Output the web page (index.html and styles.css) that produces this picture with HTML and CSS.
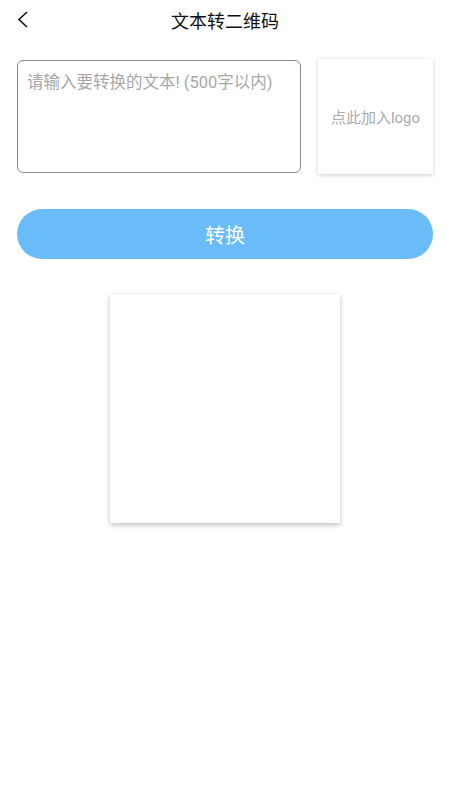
FILE: index.html
```html
<!DOCTYPE html>
<html lang="zh">
<head>
<meta charset="utf-8">
<link rel="stylesheet" href="styles.css">
</head>
<body>
<div class="header">
  <span class="back"><svg width="12" height="17" viewBox="0 0 12 17"><path d="M10 1 L2 8.5 L10 16" fill="none" stroke="#111" stroke-width="1.6"/></svg></span>
  <div class="title">文本转二维码</div>
</div>
<div class="content">
  <div class="row">
    <div class="input"><span class="ph">请输入要转换的文本! (500字以内)</span></div>
    <div class="logo">点此加入logo</div>
  </div>
  <div class="btn">转换</div>
  <div class="qr"></div>
</div>
</body>
</html>
```
FILE: styles.css
```css
html, body { margin: 0; padding: 0; background: #fff; }
body { font-family: "Roboto", "Noto Sans CJK SC", sans-serif; width: 450px; min-height: 800px; }
.header { height: 40px; position: relative; display: flex; align-items: center; justify-content: center; }
.back { position: absolute; left: 17px; top: 11px; }
.title { font-size: 18px; color: #111; font-family: "Noto Sans CJK SC", sans-serif; }
.content { padding: 19px 17px 40px; }
.row { display: flex; gap: 17px; align-items: flex-start; }
.input { width: 284px; height: 113px; box-sizing: border-box; border: 1px solid #8a8a8a; border-radius: 6px; padding: 8px 9px; margin-top: 1px; }
.ph { font-size: 16.5px; color: #a8a8a8; }
.logo { width: 115px; height: 115px; box-shadow: 0 1px 4px rgba(0,0,0,0.2); display: flex; align-items: center; justify-content: center; font-size: 15px; color: #ababab; }
.btn { margin-top: 35px; height: 50px; border-radius: 25px; background: #69bcf7; color: #fff; font-size: 20px; display: flex; align-items: center; justify-content: center; font-family: "Noto Sans CJK SC", sans-serif; }
.qr { margin: 35px auto 0; width: 230px; height: 229px; box-shadow: 0 2px 5px rgba(0,0,0,0.25); }
```
